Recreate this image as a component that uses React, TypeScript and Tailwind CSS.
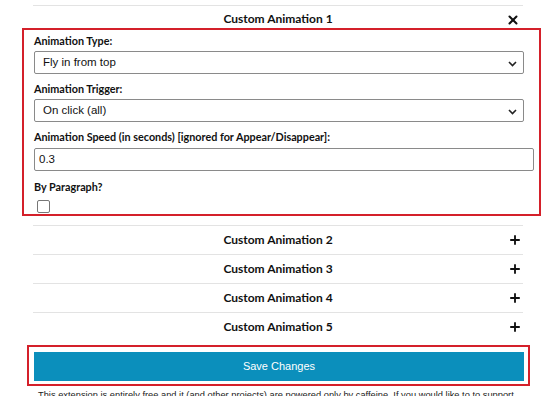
import { Plus, X } from "lucide-react";

const rows = [2, 3, 4, 5];

function Chevron() {
  return (
    <svg
      width="9"
      height="6"
      viewBox="0 0 9 6"
      className="absolute right-[6px] top-[9px]"
    >
      <path d="M1 1l3.5 3.5L8 1" fill="none" stroke="#222" strokeWidth="1.6" />
    </svg>
  );
}

function Select({ value }: { value: string }) {
  return (
    <div className="relative w-[490px] h-[23px] border border-[#8a8a8a] rounded-[2px] bg-white flex items-center pl-[8px] text-[11.5px] text-[#111] font-['Liberation_Sans',Arial,sans-serif]">
      {value}
      <Chevron />
    </div>
  );
}

export default function App() {
  return (
    <div className="w-[550px] h-[396px] overflow-hidden bg-white pt-[5px] font-['Lato',sans-serif] text-[#111]">
      {/* HEADER */}
      <div className="ml-[33px] w-[490px] h-[23px] border-t border-[#e3e3e3] relative">
        <div className="pt-[5px] text-center text-[12px] leading-[16px] font-bold">
          Custom Animation 1
        </div>
        <X
          className="absolute right-[3px] top-[7px] w-[14px] h-[14px]"
          strokeWidth={3.5}
        />
      </div>

      {/* PANEL */}
      <div className="ml-[22px] w-[519px] h-[188px] border-2 border-[#d4202a] pl-[10px] pt-[4px]">
        <div className="text-[10.8px] leading-[14px] font-bold mb-[3px]">
          Animation Type:
        </div>
        <Select value="Fly in from top" />

        <div className="text-[10.8px] leading-[14px] font-bold mt-[8px] mb-[3px]">
          Animation Trigger:
        </div>
        <Select value="On click (all)" />

        <div className="text-[10.8px] leading-[14px] font-bold mt-[8px] mb-[4px]">
          Animation Speed (in seconds) [ignored for Appear/Disappear]:
        </div>
        <div className="w-[500px] h-[23px] border border-[#8a8a8a] rounded-[2px] flex items-center pl-[4px] text-[11.5px] font-['Liberation_Sans',Arial,sans-serif]">
          0.3
        </div>

        <div className="text-[10.8px] leading-[14px] font-bold mt-[9px]">
          By Paragraph?
        </div>
        <div className="ml-[3px] mt-[6px] w-[13px] h-[13px] border border-[#777] rounded-[2px]" />
      </div>

      {/* ROWS */}
      <div className="ml-[33px] w-[490px] mt-[9px]">
        {rows.map((n) => (
          <div
            key={n}
            className="relative h-[29px] border-t border-[#e3e3e3] flex items-center justify-center"
          >
            <span className="text-[12px] font-bold">Custom Animation {n}</span>
            <Plus
              className="absolute right-[1px] top-[7px] w-[14px] h-[14px]"
              strokeWidth={3.2}
            />
          </div>
        ))}
      </div>

      {/* SAVE */}
      <div className="ml-[27px] mt-[4px] w-[503px] h-[41px] border-2 border-[#d4202a] pl-[5px] pt-[5px]">
        <button className="w-[490px] h-[29px] bg-[#0b8fbc] text-white text-[11px] font-['Liberation_Sans',Arial,sans-serif]">
          Save Changes
        </button>
      </div>

      <p className="ml-[38px] mt-[4px] text-[9.3px] leading-[11px] text-[#222] font-['Liberation_Sans',Arial,sans-serif] whitespace-nowrap">
        This extension is entirely free and it (and other projects) are powered only by caffeine. If you would like to to support
      </p>
    </div>
  );
}
